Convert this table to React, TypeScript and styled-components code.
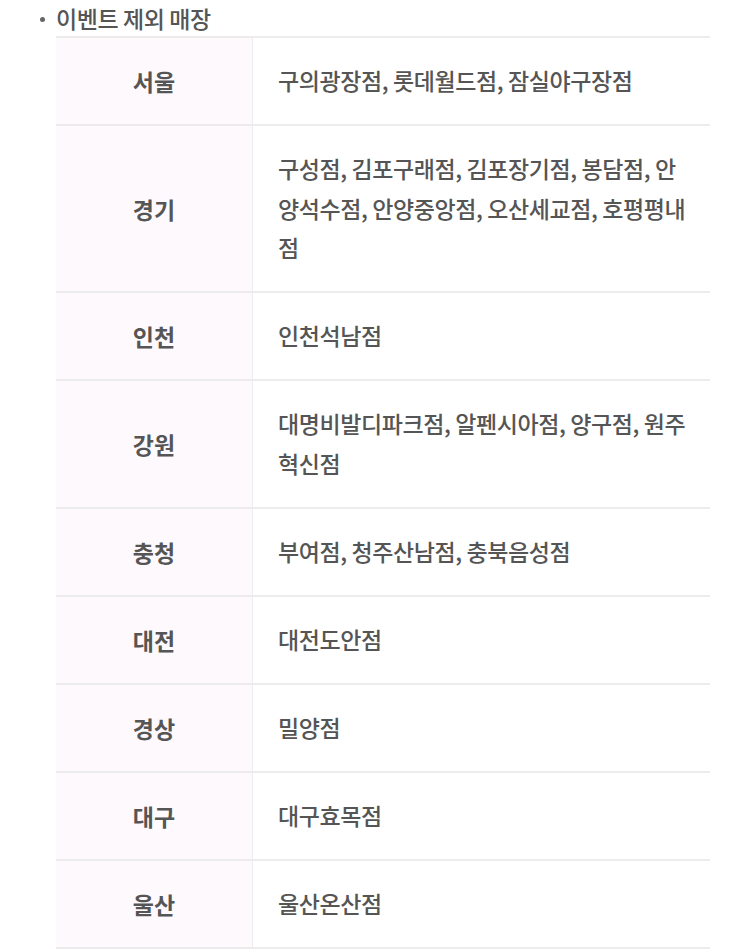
import React from 'react'
import styled, { createGlobalStyle } from 'styled-components'

const GlobalStyle = createGlobalStyle`
    body {
        margin: 0;
        background: #fff;
        font-family: "Noto Sans CJK KR", "Noto Sans", sans-serif;
        color: #555;
    }
`

const Section = styled.div`
    padding: 2px 40px 0 56px;
`

const Title = styled.div`
    position: relative;
    font-size: 23px;
    font-weight: 500;
    line-height: 32px;
    color: #555;
    margin-bottom: 2px;
    letter-spacing: -0.4px;

    &::before {
        content: '';
        position: absolute;
        left: -16px;
        top: 15px;
        width: 5px;
        height: 5px;
        border-radius: 50%;
        background: #666;
    }
`

const Table = styled.table`
    width: 654px;
    border-collapse: collapse;
    border-top: 2px solid #ececec;
    border-bottom: 2px solid #ececec;
`

const Head = styled.th`
    width: 196px;
    background: #fdf9fd;
    border-right: 1px solid #ececec;
    border-bottom: 2px solid #ececec;
    font-size: 23px;
    font-weight: 700;
    color: #555;
    text-align: center;
    padding: 0;
`

const Cell = styled.td`
    border-bottom: 2px solid #ececec;
    padding: 23.25px 22px 23.25px 25px;
    font-size: 23px;
    font-weight: 500;
    line-height: 39.5px;
    color: #555;
    letter-spacing: -0.4px;
    word-break: break-all;
`

const stores: [string, string][] = [
    ['서울', '구의광장점, 롯데월드점, 잠실야구장점'],
    ['경기', '구성점, 김포구래점, 김포장기점, 봉담점, 안양석수점, 안양중앙점, 오산세교점, 호평평내점'],
    ['인천', '인천석남점'],
    ['강원', '대명비발디파크점, 알펜시아점, 양구점, 원주혁신점'],
    ['충청', '부여점, 청주산남점, 충북음성점'],
    ['대전', '대전도안점'],
    ['경상', '밀양점'],
    ['대구', '대구효목점'],
    ['울산', '울산온산점'],
]

const App = () => {
    return (
        <>
            <GlobalStyle />
            <Section>
                <Title>이벤트 제외 매장</Title>
                <Table>
                    <tbody>
                        {stores.map(([region, list]) => (
                            <tr key={region}>
                                <Head scope="row">{region}</Head>
                                <Cell>{list}</Cell>
                            </tr>
                        ))}
                    </tbody>
                </Table>
            </Section>
        </>
    )
}

export default App
